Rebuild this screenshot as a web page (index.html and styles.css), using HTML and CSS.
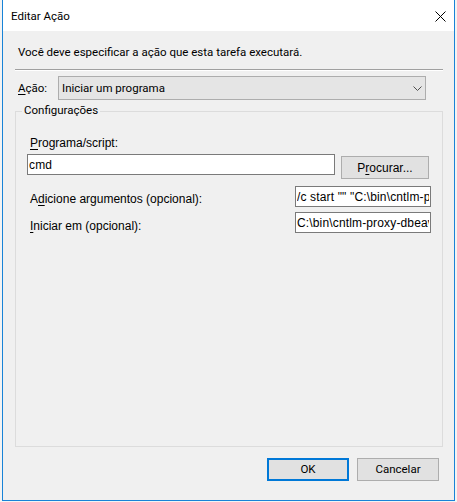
FILE: index.html
```html
<!DOCTYPE html>
<html lang="pt">
<head>
<meta charset="utf-8">
<title>Editar Ação</title>
<link rel="stylesheet" href="styles.css">
</head>
<body>
<div class="window">
  <div class="titlebar">
    <span class="title">Editar Ação</span>
    <div class="close">
      <svg width="11" height="11" viewBox="0 0 11 11"><path d="M0.5 0.5 L10.5 10.5 M10.5 0.5 L0.5 10.5" stroke="#000" stroke-width="1" fill="none"/></svg>
    </div>
  </div>
  <div class="content">
    <p class="intro">Você deve especificar a ação que esta tarefa executará.</p>
    <div class="separator"></div>
    <div class="action-row">
      <span class="action-label"><u>A</u>ção:</span>
      <div class="combo">
        <span class="combo-text">Iniciar um programa</span>
        <svg class="chevron" width="9" height="5" viewBox="0 0 9 5"><path d="M0.5 0.5 L4.5 4.5 L8.5 0.5" stroke="#505050" stroke-width="1" fill="none"/></svg>
      </div>
    </div>
    <div class="group">
      <span class="legend">Configurações</span>
      <div class="field-label"><u>P</u>rograma/script:</div>
      <div class="program-row">
        <input class="text cmd" type="text" value="cmd" readonly>
        <div class="btn browse">P<u>r</u>ocurar...</div>
      </div>
      <div class="arg-row first">
        <span class="arg-label">A<u>d</u>icione argumentos (opcional):</span>
        <input class="text short" type="text" value='/c start "" "C:\bin\cntlm-proxy-dbeaver\cntlm.exe"' readonly>
      </div>
      <div class="arg-row second">
        <span class="arg-label"><u>I</u>niciar em (opcional):</span>
        <input class="text short" type="text" value="C:\bin\cntlm-proxy-dbeaver" readonly>
      </div>
    </div>
    <div class="footer">
      <div class="btn dlg ok">OK</div>
      <div class="btn dlg">Cancelar</div>
    </div>
  </div>
</div>
</body>
</html>
```
FILE: styles.css
```css
* { box-sizing: border-box; }
html, body { margin: 0; padding: 0; }
body {
  background: #f3f3f3;
  font-family: Roboto, "Noto Sans", sans-serif;
  font-size: 11.5px;
  color: #000;
  width: 457px;
  height: 502px;
  overflow: hidden;
}
.window {
  margin-left: 2px;
  width: 453px;
  height: 501px;
  border: 1px solid #1883d7;
  border-top: none;
  background: #f0f0f0;
  display: flex;
  flex-direction: column;
}
.titlebar {
  height: 31px;
  background: #fff;
  display: flex;
  align-items: center;
  padding-left: 8px;
}
.title { line-height: 15px; padding-top: 1px; }
.close {
  margin-left: auto;
  width: 27px;
  height: 31px;
  padding-top: 2px;
  display: flex;
  align-items: center;
  justify-content: center;
}
.close svg { display: block; }
.content {
  padding: 0 11px 0 12px;
  display: flex;
  flex-direction: column;
}
.intro {
  margin: 14px 0 0 3px;
  line-height: 15px;
  height: 15px;
  white-space: nowrap;
}
.separator {
  margin-top: 9px;
  height: 2px;
  border-top: 1px solid #a0a0a0;
  border-bottom: 1px solid #fff;
}
.action-row {
  margin-top: 5px;
  display: flex;
  align-items: center;
  height: 24px;
}
.action-label {
  width: 43px;
  padding-left: 3px;
  line-height: 15px;
}
.combo {
  width: 368px;
  height: 24px;
  background: #e5e5e5;
  border: 1px solid #adadad;
  display: flex;
  align-items: center;
  padding: 0 3px 0 3px;
}
.combo-text { line-height: 15px; }
.chevron { margin-left: auto; display: block; }
.group {
  position: relative;
  margin-top: 11px;
  width: 428px;
  height: 336px;
  border: 1px solid #dcdcdc;
  padding: 0 11px;
  font-family: "Liberation Sans", Arial, sans-serif;
  font-size: 12px;
}
.legend {
  position: absolute;
  top: -9px;
  left: 6px;
  padding: 0 2px;
  background: #f0f0f0;
  font-family: Roboto, "Noto Sans", sans-serif;
  font-size: 11.5px;
  line-height: 15px;
}
.field-label {
  margin: 24px 0 0 3px;
  line-height: 14px;
}
.program-row {
  margin-top: 4px;
  display: flex;
  align-items: flex-start;
  height: 25px;
}
.text {
  height: 21px;
  border: 1px solid #7a7a7a;
  background: #fff;
  padding: 0 1px;
  margin: 0;
  font-family: "Liberation Sans", Arial, sans-serif;
  font-size: 12px;
  letter-spacing: 0.15px;
  color: #000;
  outline: none;
  border-radius: 0;
}
.cmd { width: 308px; }
.short { width: 136px; margin-left: auto; }
.btn {
  background: #e1e1e1;
  border: 1px solid #adadad;
  display: flex;
  align-items: center;
  justify-content: center;
  line-height: 14px;
}
.browse {
  margin: 2px 0 0 6px;
  width: 88px;
  height: 23px;
  padding-top: 1px;
}
.arg-row {
  display: flex;
  align-items: flex-start;
  height: 21px;
}
.arg-row.first { margin-top: 7px; }
.arg-row.second { margin-top: 5px; }
.arg-label {
  margin: 7px 0 0 3px;
  line-height: 14px;
  white-space: nowrap;
}
.arg-row.first .arg-label { margin-top: 6px; }
.arg-row.second .arg-label { margin-top: 7px; }
.footer {
  margin-top: 11px;
  display: flex;
  justify-content: flex-end;
  gap: 8px;
  padding-right: 4px;
}
.dlg {
  width: 82px;
  height: 23px;
  font-family: Roboto, "Noto Sans", sans-serif;
  font-size: 11.5px;
  line-height: 15px;
}
.ok { border: 2px solid #0078d7; }
u { text-decoration: underline; text-underline-offset: 2px; }
```
